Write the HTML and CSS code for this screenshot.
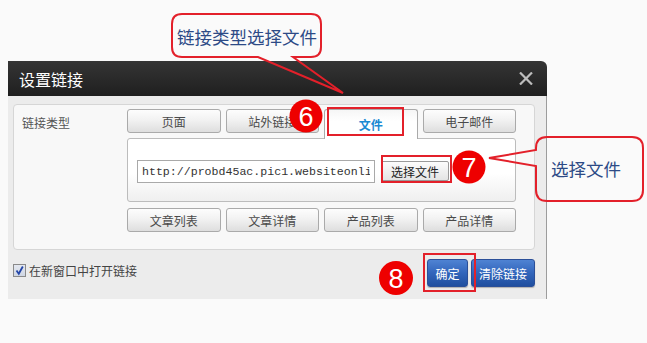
FILE: index.html
```html
<!DOCTYPE html>
<html lang="zh-CN">
<head>
    <meta charset="UTF-8">
    <meta name="viewport" content="width=device-width, initial-scale=1.0">
    <title>设置链接</title>
    <link rel="stylesheet" href="styles.css">
</head>
<body>

    <div class="scene">
        <div class="dialog">
            <div class="dlg-head">
                <span class="dlg-title">设置链接</span>
                <svg class="dlg-close" width="14" height="13" viewBox="0 0 14 13">
                    <path d="M1 0.5 L13 12.5 M13 0.5 L1 12.5" stroke="#bdbdbd" stroke-width="2.2" fill="none"/>
                </svg>
            </div>
            <div class="dlg-body">
                <div class="panel">
                    <div class="panel-label">链接类型</div>
                    <div class="panel-main">
                        <div class="tabs">
                            <button class="tab">页面</button>
                            <button class="tab">站外链接</button>
                            <button class="tab tab-active">文件</button>
                            <button class="tab">电子邮件</button>
                        </div>
                        <div class="tab-box">
                            <input class="url" type="text" value="http://probd45ac.pic1.websiteonline.cn/upload/file.pdf">
                            <button class="pick">选择文件</button>
                        </div>
                        <div class="tabs tabs-more">
                            <button class="tab">文章列表</button>
                            <button class="tab">文章详情</button>
                            <button class="tab">产品列表</button>
                            <button class="tab">产品详情</button>
                        </div>
                    </div>
                </div>
                <div class="dlg-foot">
                    <label class="check">
                        <span class="check-box">
                            <svg width="11" height="11" viewBox="0 0 11 11">
                                <path d="M2.5 5.5 L4.8 8.8 L8.8 1.5" stroke="#2446a8" stroke-width="1.8" fill="none"/>
                            </svg>
                        </span>
                        在新窗口中打开链接
                    </label>
                    <div class="actions">
                        <button class="btn-blue btn-ok">确定</button>
                        <button class="btn-blue btn-clear">清除链接</button>
                    </div>
                </div>
            </div>
        </div>

        <!-- annotations drawn over the screenshot -->
        <svg class="notes" width="647" height="343" viewBox="0 0 647 343">
            <path d="M182 14 H311 Q321 14 321 24 V47 Q321 57 311 57 H293 L343 93 L258 57 H182 Q172 57 172 47 V24 Q172 14 182 14 Z"
                  fill="none" stroke="#e3202a" stroke-width="2"/>
            <text class="note-text" x="177" y="44">链接类型选择文件</text>

            <path d="M547 137 H632 Q643 137 643 148 V190 Q643 201 632 201 H547 Q536 201 536 190 V166 L489 158 L536 150 V148 Q536 137 547 137 Z"
                  fill="none" stroke="#e3202a" stroke-width="2"/>
            <text class="note-text" x="551" y="176">选择文件</text>

            <rect x="328" y="108" width="75" height="27" fill="none" stroke="#e3202a" stroke-width="2"/>
            <rect x="382" y="156" width="69" height="26" fill="none" stroke="#e3202a" stroke-width="2"/>
            <rect x="424" y="254" width="51" height="37" fill="none" stroke="#e3202a" stroke-width="2"/>

            <circle cx="306" cy="116" r="16.5" fill="#ee0000"/>
            <text class="num" x="306" y="125.5">6</text>
            <circle cx="469" cy="167" r="16.5" fill="#ee0000"/>
            <text class="num" x="469" y="176.5">7</text>
            <circle cx="396" cy="278" r="17" fill="#ee0000"/>
            <text class="num" x="396" y="287.5">8</text>
        </svg>
    </div>

</body>
</html>
```

FILE: styles.css
```css
*{
    padding: 0;
    margin: 0;
    box-sizing: border-box;
}

body{
    background-color: #fafafa;
    font-family: "Liberation Sans", "Noto Sans CJK SC", sans-serif;
    color: #333;
}

.scene{
    position: relative;
    width: 647px;
    height: 343px;
    padding: 61px 0 0 8px;
}

.dialog{
    width: 539px;
}

.dlg-head{
    height: 35px;
    background: linear-gradient(#353535, #1f1f1f);
    border-top-right-radius: 6px;
    display: flex;
    align-items: center;
    padding: 0 14px 0 11px;
}

.dlg-title{
    color: #fff;
    font-size: 16px;
}

.dlg-close{
    margin-left: auto;
}

.dlg-body{
    background-color: #ececec;
    border-right: 1px solid #9c9c9c;
    padding: 8px 11px 12px 5px;
}

.panel{
    display: flex;
    height: 146px;
    background-color: #f8f8f8;
    border: 1px solid #d6d6d6;
    border-radius: 4px;
}

.panel-label{
    width: 113px;
    padding: 9px 0 0 8px;
    font-size: 12px;
    color: #555;
}

.panel-main{
    width: 389px;
    padding-top: 4px;
}

.tabs{
    display: grid;
    grid-template-columns: repeat(4, 1fr);
    column-gap: 5px;
    height: 29px;
    align-items: start;
    position: relative;
    z-index: 1;
}

.tab{
    height: 24px;
    border: 1px solid #aaa;
    border-radius: 3px;
    background: linear-gradient(#fdfdfd, #f2f2f2 45%, #dedede);
    font-family: inherit;
    font-size: 12px;
    color: #4a4a4a;
}

.tab-active{
    height: 30px;
    border-bottom: none;
    border-radius: 3px 3px 0 0;
    background: linear-gradient(#f6f6f6, #fff 40%);
    color: #1b8ad3;
    font-weight: bold;
}

.tab-box{
    height: 64px;
    border: 1px solid #bcbcbc;
    border-radius: 3px;
    background: linear-gradient(#fff, #fff 55%, #efefef);
    display: flex;
    align-items: center;
    padding: 2px 0 0 9px;
}

.url{
    width: 238px;
    height: 23px;
    border: 1px solid #a9a9a9;
    padding: 0 4px;
    font-family: "Liberation Mono", monospace;
    font-size: 11.6px;
    color: #333;
    background: #fff;
    outline: none;
}

.pick{
    margin-left: 6px;
    width: 68px;
    height: 20px;
    border: 1px solid #9a9a9a;
    border-radius: 2px;
    background: linear-gradient(#fcfcfc, #e4e4e4);
    font-family: inherit;
    font-size: 12px;
    color: #222;
}

.tabs-more{
    margin-top: 6px;
}

.dlg-foot{
    display: flex;
    justify-content: space-between;
    align-items: flex-start;
    padding-top: 9px;
}

.check{
    display: flex;
    align-items: center;
    gap: 3px;
    margin: 3px 0 0 0;
    font-size: 12px;
    color: #444;
}

.check-box{
    width: 13px;
    height: 13px;
    border: 1px solid #8a8a8a;
    background: linear-gradient(#e4e8f0, #cfd6e3);
    display: flex;
    align-items: center;
    justify-content: center;
}

.actions{
    display: flex;
    gap: 3px;
}

.btn-blue{
    height: 28px;
    padding: 0 5px;
    border: 1px solid #2b4f98;
    border-radius: 3px;
    background: linear-gradient(#4f83d3, #3265bb 50%, #204f9f);
    box-shadow: 0 1px 1px rgba(0, 0, 0, 0.25);
    color: #fff;
    font-family: inherit;
    font-size: 12px;
}

.btn-ok{
    width: 41px;
}

.btn-clear{
    width: 64px;
}

.notes{
    position: absolute;
    left: 0;
    top: 0;
    z-index: 2;
    pointer-events: none;
}

.note-text{
    font-family: "Noto Sans CJK SC", sans-serif;
    font-size: 17.5px;
    fill: #2d4a86;
}

.num{
    font-family: "Liberation Sans", sans-serif;
    font-size: 27px;
    fill: #fff;
    text-anchor: middle;
}
```
